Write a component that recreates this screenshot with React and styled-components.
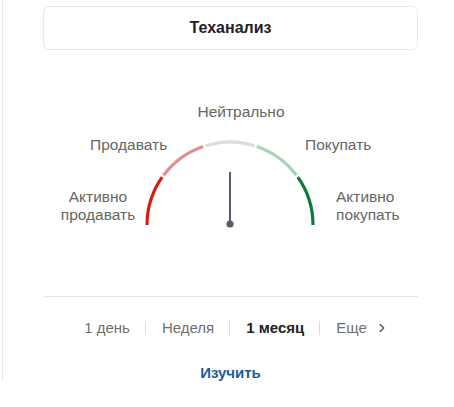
import React from "react";
import styled, { createGlobalStyle } from "styled-components";
import { ChevronRight } from "lucide-react";

const Global = createGlobalStyle`
  body {
    margin: 0;
    background: #fff;
    font-family: "Liberation Sans", Arial, sans-serif;
  }
`;

const CX = 187;
const CY = 175;
const R = 83;

const segments = [
  { from: 180, to: 144, color: "#dc1a0f" },
  { from: 144, to: 108, color: "#dd918a" },
  { from: 108, to: 72, color: "#dddddd" },
  { from: 72, to: 36, color: "#a5d5b5" },
  { from: 36, to: 0, color: "#0c7a37" },
];

const point = (deg) => {
  const a = (deg * Math.PI) / 180;
  return [CX + R * Math.cos(a), CY - R * Math.sin(a)];
};

const arcPath = (from, to) => {
  const gap = 0.8;
  const [x1, y1] = point(from - (from === 180 ? 0 : gap));
  const [x2, y2] = point(to + (to === 0 ? 0 : gap));
  return `M ${x1} ${y1} A ${R} ${R} 0 0 1 ${x2} ${y2}`;
};

const tabs = [
  { label: "1 день" },
  { label: "Неделя" },
  { label: "1 месяц", active: true },
  { label: "Еще", more: true },
];

const App = () => {
  return (
    <>
      <Global />
      <Page>
        <Panel>
          <Header>Теханализ</Header>
          <Gauge>
            <svg width="374" height="247" viewBox="0 0 374 247">
              {segments.map((s) => (
                <path
                  key={s.from}
                  d={arcPath(s.from, s.to)}
                  stroke={s.color}
                  strokeWidth="3.2"
                  fill="none"
                />
              ))}
              <line
                x1={CX}
                y1={122}
                x2={CX}
                y2={CY}
                stroke="#555b6b"
                strokeWidth="2"
              />
              <circle cx={CX} cy={CY - 1} r="3.6" fill="#555b6b" />
            </svg>
            <Label $x={198} $y={53} $center>
              Нейтрально
            </Label>
            <Label $x={47} $y={86}>
              Продавать
            </Label>
            <Label $x={262} $y={86}>
              Покупать
            </Label>
            <Label $x={55} $y={138} $center>
              Активно
              <br />
              продавать
            </Label>
            <Label $x={293} $y={138} $left>
              Активно
              <br />
              покупать
            </Label>
          </Gauge>
          <Tabs>
            {tabs.map((t, i) => (
              <React.Fragment key={t.label}>
                {i > 0 && <Sep />}
                <Tab $active={t.active}>
                  {t.label}
                  {t.more && <ChevronRight size={14} strokeWidth={2.4} />}
                </Tab>
              </React.Fragment>
            ))}
          </Tabs>
          <Explore>Изучить</Explore>
        </Panel>
      </Page>
    </>
  );
};

export default App;

const Page = styled.div`
  padding-left: 2px;
`;

const Panel = styled.div`
  width: 375px;
  height: 381px;
  border-left: 1px solid #e8e8e8;
  padding-left: 40px;
  display: flex;
  flex-direction: column;
`;

const Header = styled.div`
  margin-top: 6px;
  height: 42px;
  border: 1px solid #e9e9e9;
  border-radius: 6px;
  display: flex;
  align-items: center;
  justify-content: center;
  font-size: 16px;
  font-weight: 700;
  color: #222;
`;

const Gauge = styled.div`
  position: relative;
  height: 246px;
  border-bottom: 1px solid #e6e6e6;
  svg {
    display: block;
  }
`;

const Label = styled.div`
  position: absolute;
  left: ${({ $x }) => $x}px;
  top: ${({ $y }) => $y}px;
  transform: ${({ $center }) => ($center ? "translateX(-50%)" : "none")};
  text-align: ${({ $left }) => ($left ? "left" : "center")};
  white-space: nowrap;
  font-size: 15.5px;
  line-height: 18px;
  color: #666;
`;

const Tabs = styled.div`
  display: flex;
  align-items: center;
  justify-content: center;
  margin-top: 22px;
  height: 18px;
  padding-left: 11px;
`;

const Sep = styled.span`
  width: 1px;
  height: 14px;
  background: #dcdcdc;
`;

const Tab = styled.span`
  display: flex;
  align-items: center;
  gap: 8px;
  padding: 0 15px 0 16px;
  font-size: 15px;
  line-height: 18px;
  color: ${({ $active }) => ($active ? "#222" : "#6e6e6e")};
  font-weight: ${({ $active }) => ($active ? 700 : 400)};
  svg {
    color: #555;
  }
`;

const Explore = styled.div`
  margin-top: 27px;
  text-align: center;
  font-size: 15px;
  font-weight: 700;
  color: #1d5a9e;
`;
